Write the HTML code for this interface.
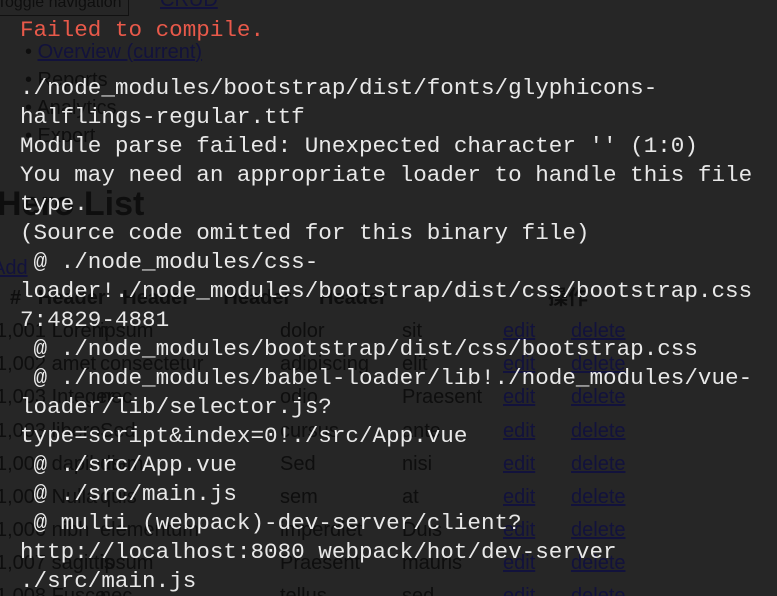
<!DOCTYPE html>
<html><head><meta charset="utf-8"><style>
html,body{margin:0;padding:0;width:777px;height:596px;overflow:hidden;background:#262626;font-family:"Liberation Sans","Noto Sans CJK SC",sans-serif;}
.bg{position:absolute;left:0;top:0;width:777px;height:596px;color:#0e0e0e;font-size:20px;overflow:hidden;}
.bg a{color:#12123c;text-decoration:underline;}
.ab{position:absolute;white-space:nowrap;line-height:24px;}
pre{position:absolute;left:20px;top:16px;margin:0;font-family:"Liberation Mono","DejaVu Sans Mono",monospace;font-size:22.6px;line-height:29px;color:#e8e8e8;white-space:pre;}
.red{color:#e8594a;}
</style></head><body>
<div class="bg">
<div class="ab" style="left:-10px;top:-10px;border:1px solid #111;padding:0 6px;font-size:16px">Toggle navigation</div>
<div class="ab" style="left:160px;top:-12px"><a>CRUD</a></div>
<div class="ab" style="left:25px;top:40px">• <a>Overview (current)</a></div>
<div class="ab" style="left:25px;top:68px">• Reports</div>
<div class="ab" style="left:25px;top:96px">• Analytics</div>
<div class="ab" style="left:25px;top:124px">• Export</div>
<div class="ab" style="left:-3px;top:186px;font-size:34px;font-weight:bold;line-height:36px">Hero List</div>
<div class="ab" style="left:-8px;top:256px"><a>Add</a></div>
<div class="ab" style="left:10px;top:286px;font-weight:bold">#&nbsp;&nbsp;&nbsp;Header&nbsp;&nbsp;&nbsp;Header&nbsp;&nbsp;&nbsp;&nbsp;&nbsp;&nbsp;Header&nbsp;&nbsp;&nbsp;&nbsp;&nbsp;Header</div>
<div class="ab" style="left:548px;top:286px;font-weight:bold">操作</div>
<div class="ab" style="left:-4px;top:319px">1,001 Lorem</div><div class="ab" style="left:100px;top:319px">ipsum</div><div class="ab" style="left:280px;top:319px">dolor</div><div class="ab" style="left:402px;top:319px">sit</div><div class="ab" style="left:503px;top:319px"><a>edit</a></div><div class="ab" style="left:571px;top:319px"><a>delete</a></div>
<div class="ab" style="left:-4px;top:352px">1,002 amet</div><div class="ab" style="left:100px;top:352px">consectetur</div><div class="ab" style="left:280px;top:352px">adipiscing</div><div class="ab" style="left:402px;top:352px">elit</div><div class="ab" style="left:503px;top:352px"><a>edit</a></div><div class="ab" style="left:571px;top:352px"><a>delete</a></div>
<div class="ab" style="left:-4px;top:385px">1,003 Integer</div><div class="ab" style="left:100px;top:385px">nec</div><div class="ab" style="left:280px;top:385px">odio</div><div class="ab" style="left:402px;top:385px">Praesent</div><div class="ab" style="left:503px;top:385px"><a>edit</a></div><div class="ab" style="left:571px;top:385px"><a>delete</a></div>
<div class="ab" style="left:-4px;top:419px">1,003 libero</div><div class="ab" style="left:100px;top:419px">Sed</div><div class="ab" style="left:280px;top:419px">cursus</div><div class="ab" style="left:402px;top:419px">ante</div><div class="ab" style="left:503px;top:419px"><a>edit</a></div><div class="ab" style="left:571px;top:419px"><a>delete</a></div>
<div class="ab" style="left:-4px;top:452px">1,004 dapibus</div><div class="ab" style="left:100px;top:452px">diam</div><div class="ab" style="left:280px;top:452px">Sed</div><div class="ab" style="left:402px;top:452px">nisi</div><div class="ab" style="left:503px;top:452px"><a>edit</a></div><div class="ab" style="left:571px;top:452px"><a>delete</a></div>
<div class="ab" style="left:-4px;top:485px">1,005 Nulla</div><div class="ab" style="left:100px;top:485px">quis</div><div class="ab" style="left:280px;top:485px">sem</div><div class="ab" style="left:402px;top:485px">at</div><div class="ab" style="left:503px;top:485px"><a>edit</a></div><div class="ab" style="left:571px;top:485px"><a>delete</a></div>
<div class="ab" style="left:-4px;top:518px">1,006 nibh</div><div class="ab" style="left:100px;top:518px">elementum</div><div class="ab" style="left:280px;top:518px">imperdiet</div><div class="ab" style="left:402px;top:518px">Duis</div><div class="ab" style="left:503px;top:518px"><a>edit</a></div><div class="ab" style="left:571px;top:518px"><a>delete</a></div>
<div class="ab" style="left:-4px;top:551px">1,007 sagittis</div><div class="ab" style="left:100px;top:551px">ipsum</div><div class="ab" style="left:280px;top:551px">Praesent</div><div class="ab" style="left:402px;top:551px">mauris</div><div class="ab" style="left:503px;top:551px"><a>edit</a></div><div class="ab" style="left:571px;top:551px"><a>delete</a></div>
<div class="ab" style="left:-4px;top:584px">1,008 Fusce</div><div class="ab" style="left:100px;top:584px">nec</div><div class="ab" style="left:280px;top:584px">tellus</div><div class="ab" style="left:402px;top:584px">sed</div><div class="ab" style="left:503px;top:584px"><a>edit</a></div><div class="ab" style="left:571px;top:584px"><a>delete</a></div>
</div>
<pre><span class="red">Failed to compile.</span>

./node_modules/bootstrap/dist/fonts/glyphicons-
halflings-regular.ttf
Module parse failed: Unexpected character '' (1:0)
You may need an appropriate loader to handle this file
type.
(Source code omitted for this binary file)
 @ ./node_modules/css-
loader!./node_modules/bootstrap/dist/css/bootstrap.css
7:4829-4881
 @ ./node_modules/bootstrap/dist/css/bootstrap.css
 @ ./node_modules/babel-loader/lib!./node_modules/vue-
loader/lib/selector.js?
type=script&amp;index=0!./src/App.vue
 @ ./src/App.vue
 @ ./src/main.js
 @ multi (webpack)-dev-server/client?
http://localhost:8080 webpack/hot/dev-server
./src/main.js</pre>
</body></html>
